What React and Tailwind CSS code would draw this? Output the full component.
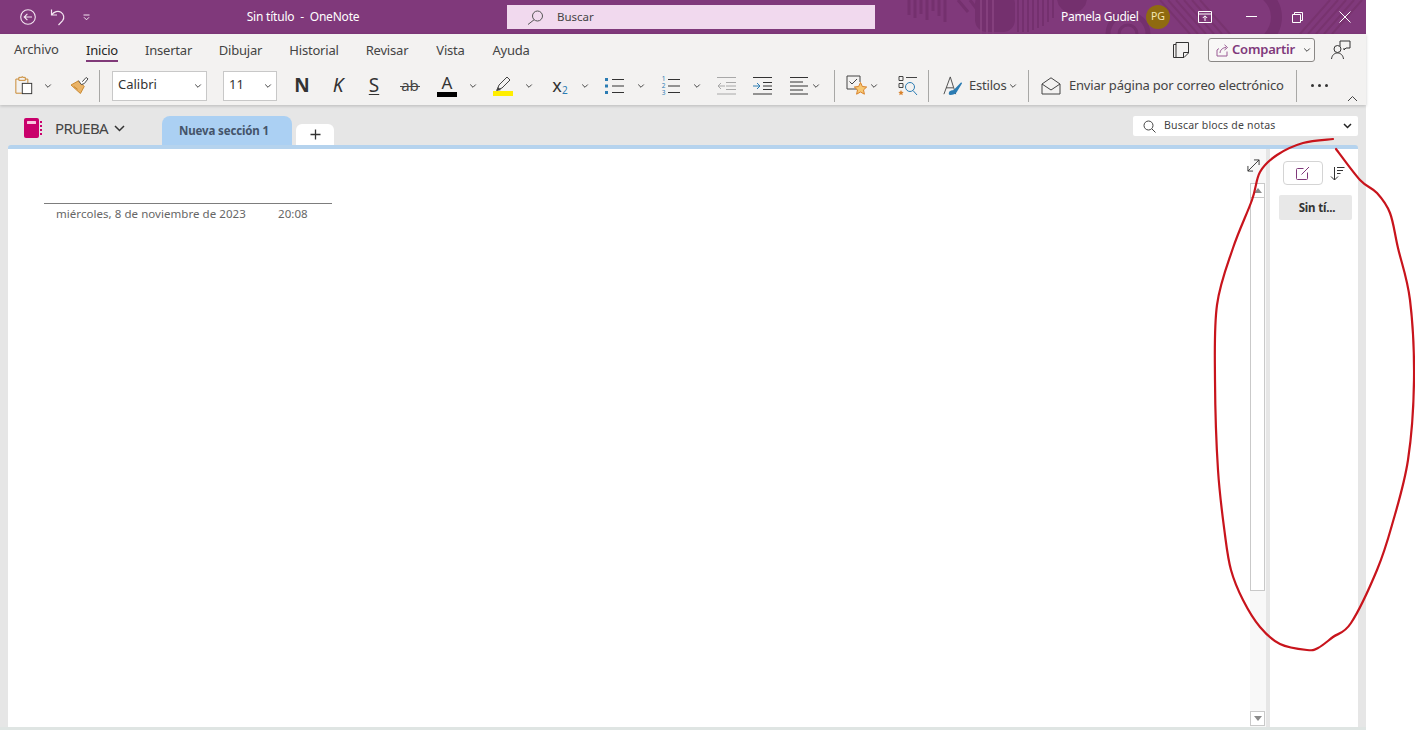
import React from "react";

const redPoints = [
  [1333, 139], [1303, 143], [1277, 155], [1260, 172], [1252, 200], [1233, 248], [1217, 305],
  [1215, 380], [1218, 470], [1225, 535], [1231, 570], [1243, 600], [1260, 627], [1280, 644],
  [1307, 650], [1318, 648], [1333, 637], [1351, 623], [1377, 570], [1392, 525], [1408, 460],
  [1414, 380], [1410, 300], [1398, 248], [1390, 213], [1377, 193], [1360, 180], [1336, 149],
];

function smoothPath(pts) {
  let d = `M${pts[0][0]} ${pts[0][1]}`;
  for (let i = 0; i < pts.length - 1; i++) {
    const p0 = pts[i - 1] || pts[i];
    const p1 = pts[i];
    const p2 = pts[i + 1];
    const p3 = pts[i + 2] || p2;
    const c1x = p1[0] + (p2[0] - p0[0]) / 6;
    const c1y = p1[1] + (p2[1] - p0[1]) / 6;
    const c2x = p2[0] - (p3[0] - p1[0]) / 6;
    const c2y = p2[1] - (p3[1] - p1[1]) / 6;
    d += ` C${c1x} ${c1y} ${c2x} ${c2y} ${p2[0]} ${p2[1]}`;
  }
  return d;
}

const Chev = ({ className = "w-4", color = "#444" }) => (
  <div className={`${className} flex justify-center shrink-0`}>
    <svg width="8" height="6" viewBox="0 0 8 6" fill="none" stroke={color} strokeWidth="1">
      <path d="M1.2 1.5 4 4.3 6.8 1.5" />
    </svg>
  </div>
);

const Sep = ({ className = "" }) => <div className={`w-px h-8 bg-[#a8a8a6] shrink-0 ${className}`} />;

const Tool = ({ className = "w-9", children }) => (
  <div className={`${className} flex items-center justify-center shrink-0`}>{children}</div>
);

const Combo = ({ className, label }) => (
  <div className={`${className} h-[30px] bg-white border border-[#c8c8c8] flex items-center justify-between pl-[5px] pr-[2px] text-[13px] text-[#333] shrink-0`}>
    <span className="-mt-[1px]">{label}</span>
    <Chev className="w-3" />
  </div>
);

const Tab = ({ active, className, children }) => (
  <div className={`${className} relative h-[32px] pt-[1px] flex items-center justify-center whitespace-nowrap text-[13px] tracking-[-.2px] ${active ? "text-[#252423]" : "text-[#444]"}`}>
    {children}
    {active && <div className="absolute left-0 right-0 bottom-[4px] h-[2px] bg-[#803a79]" />}
  </div>
);

function TitlePattern() {
  return (
    <svg className="absolute left-0 top-0" width="1366" height="34" fill="none">
      <g stroke="#74306e" strokeWidth="3">
        <path d="M909 0V15M915 0V18M921 0V14M927 0V20M933 0V11M939 0V16M945 0V22" />
        <path d="M958 0 968 12M970 0 976 8" />
      </g>
      <rect x="975" y="-8" width="40" height="40" rx="12" fill="#74306e" />
      <g stroke="#843f7d" strokeWidth="2">
        <path d="M981 0V34M987 0V34M993 0V34" />
      </g>
      <g stroke="#74306e" strokeWidth="2">
        <path d="M1018 0V32M1023 0V32M1028 0V32M1033 0V30M1038 0V28M1043 0V26M1048 0V22M1053 0V18" />
      </g>
      <circle cx="1072" cy="-2" r="15" fill="#74306e" />
      <circle cx="1128" cy="34" r="20" stroke="#74306e" strokeWidth="5" />
      <circle cx="1128" cy="34" r="9" stroke="#74306e" strokeWidth="3" />
      <path d="M1262 -8C1282 6 1280 28 1264 42" stroke="#74306e" strokeWidth="11" />
      <g stroke="#78336f" strokeWidth="2">
        <path d="M1160 0 1190 34M1168 0 1198 34M1176 0 1206 34M1184 0 1214 34M1192 0 1222 34M1200 0 1230 34" />
        <path d="M1300 34 1330 0M1308 34 1338 0M1316 34 1346 0M1324 34 1354 0M1332 34 1362 0" />
      </g>
    </svg>
  );
}

function TitleBar() {
  return (
    <div className="relative h-[34px] bg-[#80397b] flex items-center text-white shrink-0 overflow-hidden">
      <TitlePattern />
      <div className="relative flex items-center w-full">
        <div className="w-[37px] flex justify-end">
          <svg width="18" height="18" viewBox="0 0 18 18" fill="none" stroke="#f3e6f1" strokeWidth="1.1">
            <circle cx="9" cy="9" r="7.3" />
            <path d="M13 9H5.2M8.400 5.800 5.200 9l3.200 3.200" />
          </svg>
        </div>
        <div className="w-[29px] flex justify-end">
          <svg width="16" height="18" viewBox="0 0 16 18" fill="none" stroke="#f3e6f1" strokeWidth="1.2">
            <path d="M1.500 1.500V7H7M1.500 7C4 3.500 8 2.500 11 4.200c3 2 3.600 5.800 1.600 8.400L8.500 17" />
          </svg>
        </div>
        <div className="w-[24px] flex justify-end">
          <svg width="7" height="7" viewBox="0 0 7 7" fill="none" stroke="#f3e6f1" strokeWidth="1">
            <path d="M0.500 1H6.500M1 3.300 3.500 5.800 6 3.300" />
          </svg>
        </div>
        <div className="ml-[143px] w-[140px] text-[12px] tracking-[-.2px] text-center whitespace-pre">Sin título  -  OneNote</div>
        <div className="ml-[134px] w-[368px] h-[24px] bg-[#f1d9ee] flex items-center text-[#444] text-[11.5px]">
          <svg className="ml-[20px]" width="17" height="15" viewBox="0 0 17 15" fill="none" stroke="#555" strokeWidth="1">
            <circle cx="10.500" cy="6" r="5" />
            <path d="M7 9.800 1 14.500" />
          </svg>
          <span className="ml-[13px]">Buscar</span>
        </div>
        <div className="ml-[186px] w-[76px] text-[12px] tracking-[-.3px] whitespace-nowrap">Pamela Gudiel</div>
        <div className="ml-[9px] w-[24px] h-[24px] rounded-full bg-[#8f6a10] flex items-center justify-center text-[10.5px] text-[#f5e7b5]">PG</div>
        <div className="ml-[28px]">
          <svg width="14" height="12" viewBox="0 0 14 12" fill="none" stroke="#fff" strokeWidth="1" className="block">
            <path d="M.5 .5H13.500V11.500H.5ZM.5 3H13.500M7 10V5M4.800 7 7 4.800 9.200 7" />
          </svg>
        </div>
        <div className="ml-[34px]">
          <svg width="11" height="2" className="block"><path d="M0 .5H11" stroke="#fff" /></svg>
        </div>
        <div className="ml-[35px]">
          <svg width="11" height="11" viewBox="0 0 11 11" fill="none" stroke="#fff" className="block">
            <path d="M.5 2.500H8.500V10.500H.5ZM2.500 2.500V.5H10.500V8.500H8.500" />
          </svg>
        </div>
        <div className="ml-[36px]">
          <svg width="12" height="12" viewBox="0 0 12 12" fill="none" stroke="#fff" className="block">
            <path d="M.5 .5 11.500 11.500M11.500 .5 .5 11.500" />
          </svg>
        </div>
      </div>
    </div>
  );
}

function MenuRow() {
  return (
    <div className="h-[32px] flex items-center pl-[14px] relative">
      <div className="w-[72px] text-[13px] tracking-[-.1px] text-[#444]">Archivo</div>
      <div className="flex gap-[28px]">
        <Tab active className="w-[32px]">Inicio</Tab>
        <Tab className="w-[45px]">Insertar</Tab>
        <Tab className="w-[43px]">Dibujar</Tab>
        <Tab className="w-[48px]">Historial</Tab>
        <Tab className="w-[42px]">Revisar</Tab>
        <Tab className="w-[29px]">Vista</Tab>
        <Tab className="w-[36px]">Ayuda</Tab>
      </div>
      <div className="ml-auto flex items-center">
        <svg width="16" height="16" viewBox="0 0 16 16" fill="none" stroke="#333" strokeWidth="1">
          <path d="M3 .5H15.500V11L11 15.500H3ZM3 2.500H.5V15.500H3M15.500 10.500H10.500V15.500" />
        </svg>
        <div className="ml-[19px] w-[107px] h-[24px] bg-white/40 border border-[#8a8886] rounded-[3px] flex items-center pl-[7px]">
          <svg width="13" height="13" viewBox="0 0 13 13" fill="none" stroke="#9a5b94" strokeWidth="1">
            <path d="M1 6V12H11V7.500M1 6 3 4.500M4 9C4 6 7 3.500 10 3.500M8.500 .8 11.500 3.500 8.500 6" />
          </svg>
          <span className="ml-[3px] text-[13px] tracking-[-.2px] font-semibold text-[#80397b]">Compartir</span>
          <Chev className="w-3 ml-auto mr-[1px]" />
        </div>
        <svg className="ml-[16px] mr-[15px]" width="20" height="20" viewBox="0 0 20 20" fill="none" stroke="#333" strokeWidth="1">
          <circle cx="6.500" cy="9" r="3.500" />
          <path d="M.5 19C1 15 3.500 13 6.500 13S12 15 12.500 19M9 6V1H19V8H15L13 10V8" />
        </svg>
      </div>
    </div>
  );
}

function RibbonRow() {
  return (
    <div className="h-[39px] flex items-center pl-[8px] relative">
      <Tool className="w-8">
        <svg width="18" height="19" viewBox="0 0 21 22" fill="none" strokeWidth="1.100">
          <path d="M4.500 3.500H1V20H8M12 3.500H15V8M4.500 3.500V1.500H8V0.800H9V1.500H12V5H4.500Z" stroke="#c8862c" />
          <rect x="8.500" y="8.500" width="11" height="12" stroke="#333" fill="#fff" />
        </svg>
      </Tool>
      <Chev />
      <Tool className="w-[34px] ml-[6px]">
        <svg width="19" height="17" viewBox="0 0 20 18" fill="none">
          <path d="M1 8.500 9 4l6 6-4 7.500Z" fill="#eab366" stroke="#c8862c" />
          <path d="M9 4 12 8l3-1 4-5-2-1.500-4 4.500" stroke="#444" fill="#fff" />
          <path d="M4 10 8 13" stroke="#c8862c" />
        </svg>
      </Tool>
      <Sep className="ml-[3px]" />
      <Combo className="ml-3 w-[95px]" label="Calibri" />
      <Combo className="ml-4 w-[54px]" label="11" />
      <Tool className="w-9 ml-[7px] text-[19px] font-bold text-[#333]">N</Tool>
      <Tool className="w-9 text-[19px] italic text-[#333]">K</Tool>
      <Tool className="w-9 text-[19px] underline underline-offset-2 decoration-1 text-[#333]">S</Tool>
      <Tool className="w-9 text-[15px] text-[#444] relative">
        ab
        <div className="absolute left-[8px] right-[8px] top-1/2 h-px bg-[#444]" />
      </Tool>
      <Tool className="w-9 ml-px">
        <div className="w-[20px] flex flex-col items-center">
          <span className="text-[17px] leading-[17px] text-[#333]">A</span>
          <div className="w-[20px] h-[5px] bg-black mt-px" />
        </div>
      </Tool>
      <Chev />
      <Tool className="w-9 ml-1">
        <div className="w-[20px] flex flex-col items-center">
          <svg width="20" height="15" viewBox="0 0 20 15" fill="none">
            <path d="M4 14 6 9l8-8 3 3-8 8Z" stroke="#444" />
            <path d="M3 15 5 11l3 3Z" fill="#444" />
          </svg>
          <div className="w-[20px] h-[5px] bg-[#ffee00]" />
        </div>
      </Tool>
      <Chev />
      <Tool className="w-9 ml-[5px]">
        <span className="text-[18px] text-[#333]">x</span>
        <span className="text-[10px] text-[#2b7cb3] mt-[9px]">2</span>
      </Tool>
      <Chev className="w-[14px]" />
      <Tool className="w-9 ml-[5px]">
        <svg width="20" height="18" viewBox="0 0 20 18">
          <path d="M0 1H3V4H0ZM0 7.500H3V10.500H0ZM0 14H3V17H0Z" fill="#2b7cb3" />
          <path d="M7 2.500H19M7 9H19M7 15.500H19" stroke="#333" />
        </svg>
      </Tool>
      <Chev />
      <Tool className="w-9 ml-1 relative">
        <div className="flex flex-col text-[6.5px] leading-[7px] text-[#2b7cb3] mr-[3px]"><span>1</span><span>2</span><span>3</span></div>
        <svg width="12" height="18" viewBox="0 0 12 18"><path d="M0 2.500H12M0 9H12M0 15.500H12" stroke="#333" /></svg>
      </Tool>
      <Chev />
      <Tool className="w-9 ml-1">
        <svg width="20" height="18" viewBox="0 0 20 18" fill="none" stroke="#a8a8a8">
          <path d="M0 .5H19M9 5.500H19M9 9H19M9 12.500H19M0 17H19M8 9H1M4 6 1 9l3 3" />
        </svg>
      </Tool>
      <Tool className="w-9">
        <svg width="20" height="18" viewBox="0 0 20 18" fill="none" stroke="#333">
          <path d="M0 .5H19M10 5.500H19M10 9H19M10 12.500H19M0 17H19" />
          <path d="M0 9H7M4 6 7 9l-3 3" stroke="#2b7cb3" />
        </svg>
      </Tool>
      <Tool className="w-[26px] ml-[5px]">
        <svg width="19" height="18" viewBox="0 0 19 18" fill="none" stroke="#333">
          <path d="M0 .5H18M0 5H13M0 9H18M0 13H13M0 17H18" />
        </svg>
      </Tool>
      <Chev className="w-2" />
      <Sep className="ml-[14px]" />
      <Tool className="w-[22px] ml-[11px]">
        <svg width="22" height="21" viewBox="0 0 22 21" fill="none">
          <path d="M12 14H1V1H14V7" stroke="#444" />
          <path d="M3.500 6.500 6 9l5-5" stroke="#444" />
          <path d="m14.500 7.500 1.900 4 4.300.5-3.200 2.900.9 4.300-3.900-2.200-3.900 2.200.9-4.300-3.200-2.900 4.300-.5Z" fill="#f7c873" stroke="#d9822b" />
        </svg>
      </Tool>
      <Chev className="w-3" />
      <Tool className="w-[22px] ml-[17px]">
        <svg width="20" height="20" viewBox="0 0 20 20" fill="none">
          <path d="M1 .5H5V4.500H1ZM1 7.500H5V11.500H1Z" stroke="#444" />
          <path d="M8 1.500H19" stroke="#444" />
          <path d="m3 14 .8 1.800 1.900.2-1.400 1.300.4 1.900L3 18.200l-1.700 1 .4-1.900L.3 16l1.900-.2Z" fill="#d9822b" />
          <circle cx="12" cy="11" r="4.500" stroke="#2b7cb3" />
          <path d="m15 14.500 4 4.500" stroke="#2b7cb3" />
        </svg>
      </Tool>
      <Sep className="ml-[9px]" />
      <Tool className="w-[20px] ml-[14px]">
        <svg width="20" height="20" viewBox="0 0 22 22" fill="none">
          <path d="M1 20 8 1l6 19M3.500 13H11" stroke="#444" />
          <path d="M8 21c-2 0-2-2-1-4 2-2 4-1 5-2L20 7l1 1-6 10c-1 2-4 3-7 3Z" fill="#2b7cb3" />
        </svg>
      </Tool>
      <span className="ml-[6px] text-[13px] tracking-[-.2px] text-[#444] w-[37px]">Estilos</span>
      <Chev className="w-3 ml-[1px]" />
      <Sep className="ml-[9px]" />
      <Tool className="w-[20px] ml-[12px]">
        <svg width="20" height="18" viewBox="0 0 20 18" fill="none" stroke="#444">
          <path d="M1 7 10 .8 19 7V17H1ZM1 7 10 13 19 7" />
        </svg>
      </Tool>
      <span className="ml-[8px] w-[215px] text-[13px] tracking-[-.2px] text-[#444] whitespace-nowrap">Enviar página por correo electrónico</span>
      <Sep className="ml-[12px]" />
      <div className="ml-[14px] flex gap-[4px]">
        <div className="w-[3px] h-[3px] rounded-full bg-[#333]" />
        <div className="w-[3px] h-[3px] rounded-full bg-[#333]" />
        <div className="w-[3px] h-[3px] rounded-full bg-[#333]" />
      </div>
      <svg className="absolute left-[1347px] top-[29px]" width="11" height="7" viewBox="0 0 11 7" fill="none" stroke="#444">
        <path d="M1 6 5.500 1.500 10 6" />
      </svg>
    </div>
  );
}

function NotebookBar() {
  return (
    <div className="h-[40px] shrink-0 flex items-end pl-[24px] pr-[8px] relative">
      <div className="flex items-center h-[40px] pt-[6px] w-[138px]">
        <svg width="18" height="20" viewBox="0 0 18 20">
          <rect x="0" y="0" width="15" height="20" rx="2" fill="#c9006b" />
          <rect x="3" y="3" width="9" height="3" rx=".5" fill="#f8c6de" />
          <path d="M16 3H18V5H16ZM16 7H18V9H16ZM16 11H18V13H16ZM16 15H18V17H16Z" fill="#c9006b" />
        </svg>
        <span className="ml-[13px] text-[15px] tracking-[-.7px] text-[#444]">PRUEBA</span>
        <svg className="ml-[6px]" width="11" height="7" viewBox="0 0 11 7" fill="none" stroke="#333" strokeWidth="1.500">
          <path d="M1 1 5.500 5.500 10 1" />
        </svg>
      </div>
      <div className="w-[130px] h-[29px] bg-[#abd0f3] rounded-t-[8px] flex items-center justify-center pr-[6px] text-[11.5px] tracking-[-.15px] font-bold text-[#44546a]">
        Nueva sección 1
      </div>
      <div className="ml-[4px] w-[38px] h-[21px] bg-white rounded-t-[6px] flex items-center justify-center">
        <svg width="11" height="11" viewBox="0 0 11 11" stroke="#333" strokeWidth="1.300">
          <path d="M5.500 .5V10.500M.5 5.500H10.500" />
        </svg>
      </div>
      <div className="absolute right-[8px] top-[11px] w-[225px] h-[20px] bg-white rounded-[2px] flex items-center text-[10.5px] text-[#444] tracking-[.2px]">
        <svg className="ml-[10px]" width="13" height="13" viewBox="0 0 13 13" fill="none" stroke="#444">
          <circle cx="5.500" cy="5.500" r="4.500" />
          <path d="m9 9 3.500 3.500" />
        </svg>
        <span className="ml-[8px]">Buscar blocs de notas</span>
        <svg className="ml-auto mr-[6px]" width="9" height="6" viewBox="0 0 9 6" fill="none" stroke="#222" strokeWidth="1.500">
          <path d="M1 1 4.500 4.500 8 1" />
        </svg>
      </div>
    </div>
  );
}

function Scrollbar() {
  return (
    <div className="w-[16px] bg-[#f8f8f8] shrink-0 flex flex-col pt-[34px] pb-[1px]">
      <div className="w-[15px] h-[408px] bg-white border border-[#c9c9c9] shrink-0">
        <div className="h-[14px] border-b border-[#c9c9c9] flex items-center justify-center">
          <div className="w-0 h-0 border-x-[4px] border-x-transparent border-b-[5px] border-b-[#8a8a8a]" />
        </div>
      </div>
      <div className="mt-auto w-[15px] h-[15px] bg-white border border-[#c9c9c9] flex items-center justify-center">
        <div className="w-0 h-0 border-x-[4px] border-x-transparent border-t-[5px] border-t-[#8a8a8a]" />
      </div>
    </div>
  );
}

function PageList() {
  return (
    <div className="w-[88px] bg-white shrink-0 pt-[12px] pl-[9px]">
      <div className="flex items-center">
        <div className="ml-[4px] w-[40px] h-[24px] border border-[#d4d4d4] rounded-[4px] bg-white flex items-center justify-center">
          <svg width="14" height="14" viewBox="0 0 14 14" fill="none" stroke="#80397b">
            <path d="M11.500 6.500V12.500a1 1 0 0 1-1 1H1.500a1 1 0 0 1-1-1V3.500a1 1 0 0 1 1-1H7.500M5.500 8.500 13 1" />
          </svg>
        </div>
        <svg className="ml-[7px]" width="15" height="15" viewBox="0 0 15 15" fill="none" stroke="#333">
          <path d="M4.500 1V14M1 10.500 4.500 14 8 10.500M7 1.500H14.500M7 4.500H13M7 7.500H10.500" />
        </svg>
      </div>
      <div className="mt-[10px] w-[73px] h-[25px] bg-[#e8e8e8] rounded-[2px] flex items-center justify-center pl-[3px] text-[11.5px] tracking-[-.2px] font-bold text-[#333]">
        Sin tí...
      </div>
    </div>
  );
}

function Workspace() {
  return (
    <div className="flex-1 min-h-0 pl-[8px] pr-[8px]">
      <div className="h-full border-t-[4px] border-[#b5d3ee] rounded-t-[3px] flex bg-white">
        <div className="w-[1242px] shrink-0 relative">
          <div className="ml-[36px] mt-[54px] w-[288px] border-t border-[#7d7d7d] pt-[1px] pl-[12px] flex text-[11.5px] tracking-[.05px] text-[#666]">
            <span className="w-[222px] whitespace-nowrap">miércoles, 8 de noviembre de 2023</span>
            <span>20:08</span>
          </div>
          <svg className="absolute right-[-10px] top-[10px]" width="13" height="13" viewBox="0 0 14 14" fill="none" stroke="#333">
            <path d="M1 13 13 1M7.500 1H13V6.500M1 7.500V13H6.500" />
          </svg>
        </div>
        <Scrollbar />
        <div className="w-[4px] bg-[#e6e6e6] shrink-0" />
        <PageList />
      </div>
    </div>
  );
}

export default function App() {
  return (
    <div className="relative w-[1415px] h-[730px] bg-white overflow-hidden font-['Noto_Sans','Open_Sans',sans-serif]">
      <div className="w-[1366px] h-full flex flex-col bg-[#e6e6e6]">
        <TitleBar />
        <div className="h-[71px] bg-[#f3f2f1] shrink-0 shadow-[0_1px_3px_rgba(0,0,0,0.2)] relative">
          <MenuRow />
          <RibbonRow />
        </div>
        <NotebookBar />
        <Workspace />
        <div className="h-[3px] bg-[#dfe5e3] shrink-0" />
      </div>
      <svg className="absolute inset-0 pointer-events-none" width="1415" height="730" fill="none">
        <path d={smoothPath(redPoints)} stroke="#c8141c" strokeWidth="2.200" strokeLinecap="round" />
      </svg>
    </div>
  );
}
